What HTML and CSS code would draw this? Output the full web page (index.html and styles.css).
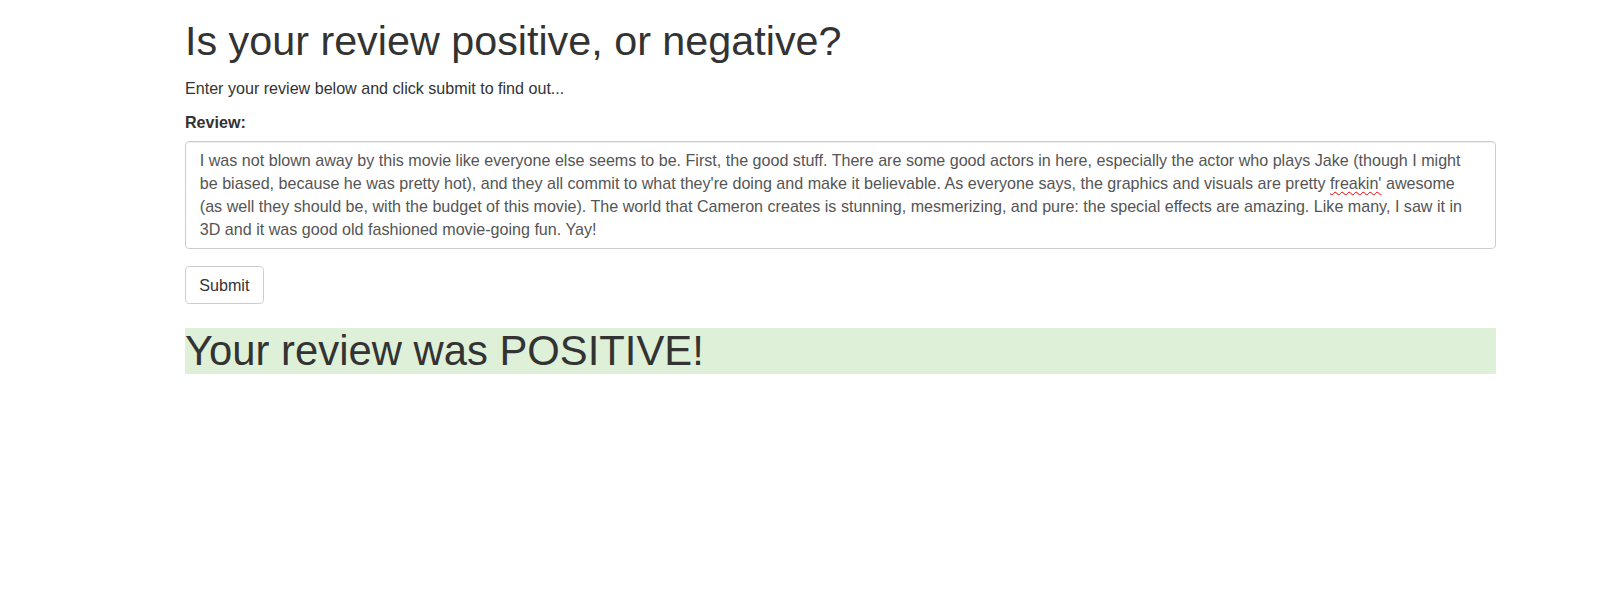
FILE: index.html
```html
<!DOCTYPE html>
<html lang="en">
<head>
<meta charset="utf-8">
<title>Review Sentiment</title>
<link rel="stylesheet" href="styles.css">
</head>
<body>
<div class="container">
  <h1 class="title">Is your review positive, or negative?</h1>
  <p class="lead-text">Enter your review below and click submit to find out...</p>
  <form class="review-form">
    <div class="form-group">
      <label class="field-label">Review:</label>
      <div class="review-box" role="textbox" aria-multiline="true">I was not blown away by this movie like everyone else seems to be. First, the good stuff. There are some good actors in here, especially the actor who plays Jake (though I might be biased, because he was pretty hot), and they all commit to what they're doing and make it believable. As everyone says, the graphics and visuals are pretty <span class="misspelled">freakin'</span> awesome (as well they should be, with the budget of this movie). The world that Cameron creates is stunning, mesmerizing, and pure: the special effects are amazing. Like many, I saw it in 3D and it was good old fashioned movie-going fun. Yay!</div>
    </div>
    <button type="button" class="btn">Submit</button>
  </form>
  <h1 class="result">Your review was POSITIVE!</h1>
</div>
</body>
</html>
```

FILE: styles.css
```css
html, body {
  margin: 0;
  padding: 0;
  background: #fff;
}
body {
  font-family: "Liberation Sans", Arial, Helvetica, sans-serif;
  font-size: 16.1px;
  line-height: 23px;
  color: #333;
}
.container {
  margin-left: 185px;
  width: 1311px;
}
.title {
  font-size: 41.3px;
  line-height: 45.5px;
  font-weight: 500;
  margin: 19px 0 12.5px;
  color: #333;
}
.lead-text {
  margin: 0 0 11px;
}
.review-form {
  margin: 0;
}
.form-group {
  margin-bottom: 16.5px;
}
.field-label {
  display: block;
  font-weight: bold;
  margin-bottom: 7px;
}
.review-box {
  box-sizing: border-box;
  width: 100%;
  height: 108px;
  padding: 6.5px 13.8px;
  border: 1px solid #ccc;
  border-radius: 4.6px;
  color: #555;
  font-size: 16.1px;
  line-height: 23px;
  box-shadow: inset 0 1px 1px rgba(0,0,0,.075);
  overflow: hidden;
}
.misspelled {
  text-decoration: underline wavy #e00;
  text-decoration-thickness: 1px;
  text-underline-offset: 2px;
}
.btn {
  display: block;
  box-sizing: border-box;
  height: 38.5px;
  padding: 0 13.3px;
  font-family: inherit;
  font-size: 16.1px;
  line-height: 36.5px;
  color: #333;
  background: #fff;
  border: 1px solid #ccc;
  border-radius: 4.6px;
  cursor: pointer;
}
.result {
  font-size: 41.8px;
  line-height: 46px;
  font-weight: 500;
  margin: 24px 0 0;
  background: #dff0d8;
  color: #333;
}
```
